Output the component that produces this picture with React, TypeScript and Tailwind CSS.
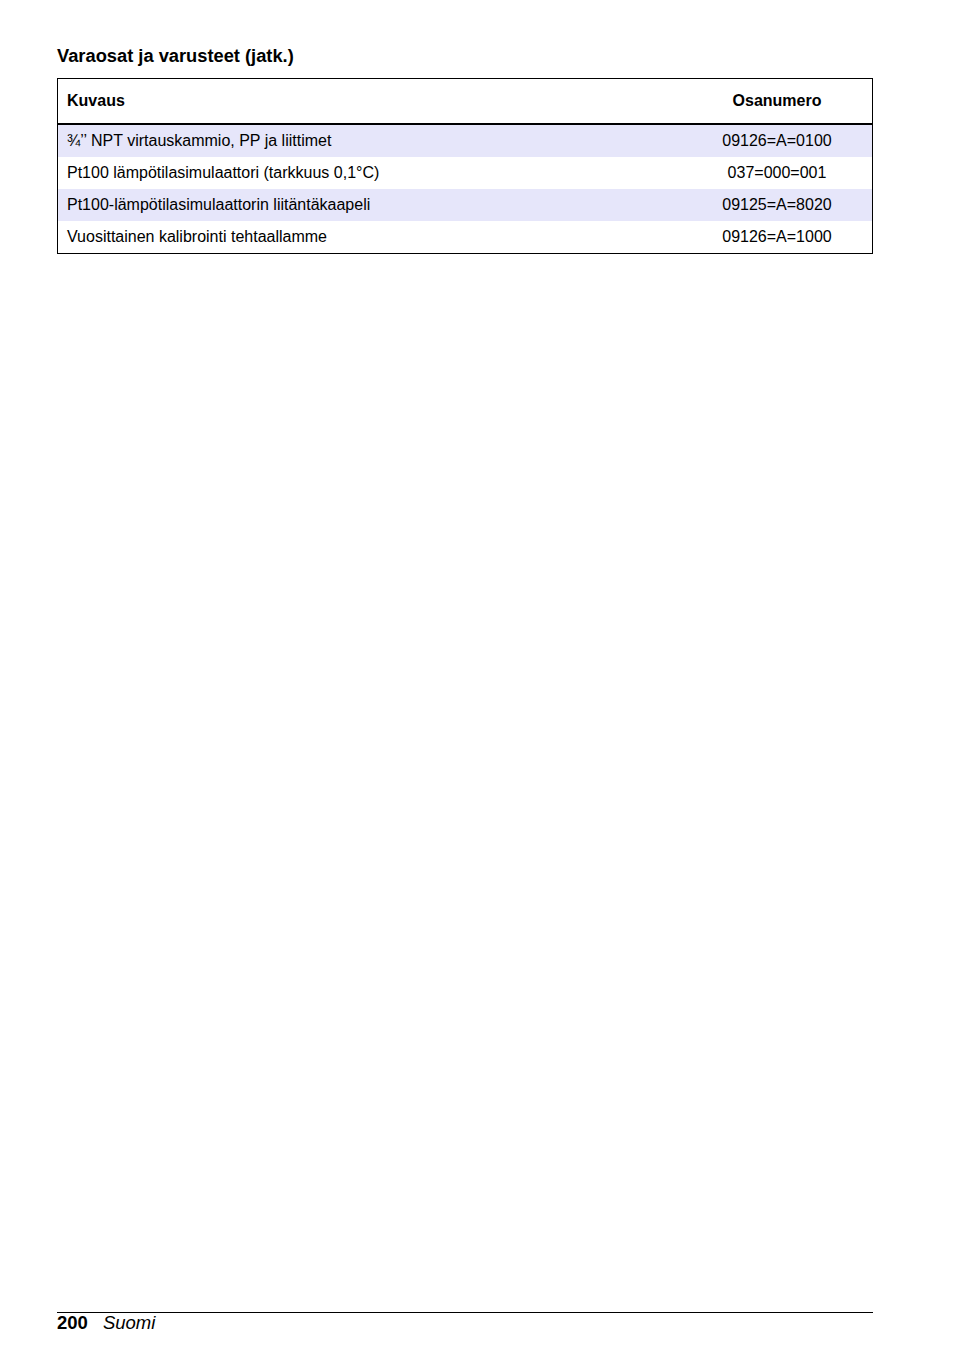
const rows = [
  { kuvaus: '¾’’ NPT virtauskammio, PP ja liittimet', osa: '09126=A=0100' },
  { kuvaus: 'Pt100 lämpötilasimulaattori (tarkkuus 0,1°C)', osa: '037=000=001' },
  { kuvaus: 'Pt100-lämpötilasimulaattorin liitäntäkaapeli', osa: '09125=A=8020' },
  { kuvaus: 'Vuosittainen kalibrointi tehtaallamme', osa: '09126=A=1000' },
]

export default function App() {
  return (
    <div className="relative h-[1354px] w-[954px] bg-white text-black font-['Liberation_Sans',Arial,sans-serif]">
      <div className="pl-[57px] pt-[45px]">
        <h2 className="text-[18.3px] leading-[22px] font-bold">Varaosat ja varusteet (jatk.)</h2>
        <div className="mt-[11px] w-[816px] border border-black">
          <div className="flex h-[46px] items-center border-b-2 border-black text-[16px] font-bold">
            <div className="flex-1 pl-[9px]">Kuvaus</div>
            <div className="w-[190px] text-center">Osanumero</div>
          </div>
          {rows.map((r, i) => (
            <div
              key={r.osa}
              className={`flex h-[32px] items-center text-[16px] ${i % 2 === 0 ? 'bg-[#e6e6fa]' : 'bg-white'}`}
            >
              <div className="flex-1 pl-[9px]">{r.kuvaus}</div>
              <div className="w-[190px] text-center">{r.osa}</div>
            </div>
          ))}
        </div>
      </div>
      <div className="absolute left-[57px] top-[1312px] w-[816px] border-t border-black flex items-baseline gap-[15px] text-[18.5px] leading-[20px]">
        <span className="font-bold">200</span>
        <span className="italic">Suomi</span>
      </div>
    </div>
  )
}
